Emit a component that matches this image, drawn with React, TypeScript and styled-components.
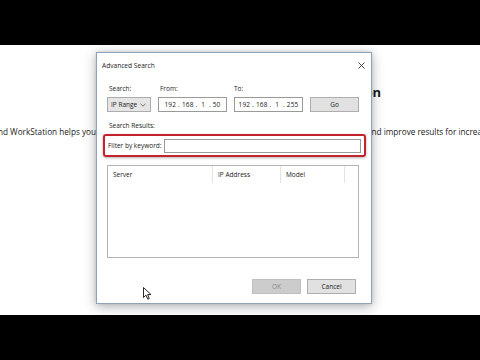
import React from 'react'
import styled, { createGlobalStyle } from 'styled-components'

const GlobalStyle = createGlobalStyle`
  html, body {
    margin: 0;
    padding: 0;
    background: #000;
  }
  body {
    font-family: "Open Sans", "Noto Sans", sans-serif;
  }
`

const Frame = styled.div`
  width: 480px;
  height: 360px;
  display: flex;
  flex-direction: column;
  background: #000;
  overflow: hidden;
`

const Letterbox = styled.div`
  height: 45px;
  flex: none;
  background: #000;
`

const Stage = styled.div`
  position: relative;
  height: 270px;
  flex: none;
  background: #fff;
  overflow: hidden;
`

const Heading = styled.div`
  padding: 38px 99px 0 0;
  height: 18px;
  line-height: 18px;
  text-align: right;
  font-size: 13px;
  font-weight: 700;
  color: #1a1a1a;
  white-space: nowrap;
`

const Lead = styled.div`
  display: flex;
  margin-top: 25px;
  height: 12px;
  line-height: 12px;
  font-size: 8.2px;
  color: #222;
  white-space: nowrap;
`

const LeadClip = styled.div`
  width: 96px;
  flex: none;
  display: flex;
  justify-content: flex-end;
  overflow: hidden;
`

const LeadGap = styled.div`
  width: 271px;
  flex: none;
`

const Dialog = styled.div`
  position: absolute;
  left: 96px;
  top: 7px;
  width: 274px;
  height: 250px;
  background: #fff;
  border: 1px solid #8fa3b8;
  box-shadow: 0 3px 12px rgba(0, 0, 0, 0.28), 0 0 4px rgba(80, 110, 140, 0.25);
  display: flex;
  flex-direction: column;
  font-size: 6.5px;
  line-height: 10px;
  color: #1a1a1a;
`

const TitleBar = styled.div`
  height: 25px;
  display: flex;
  align-items: center;
  justify-content: space-between;
  padding: 0 6px 0 5px;
  font-size: 6.6px;
`

const Body = styled.div`
  display: flex;
  flex-direction: column;
  padding: 0 12px 0 10px;
`

const FieldGrid = styled.div`
  display: grid;
  grid-template-columns: 44px 69px 69px 48px;
  grid-template-rows: 10px 15px;
  column-gap: 7px;
  row-gap: 3px;
  margin-top: 6px;
`

const Label = styled.div<{ $offset?: number }>`
  height: 10px;
  line-height: 10px;
  padding-left: ${(p) => p.$offset ?? 2}px;
`

const Select = styled.div`
  height: 15px;
  box-sizing: border-box;
  border: 1px solid #acacac;
  background: #e5e5e5;
  display: flex;
  align-items: center;
  justify-content: space-between;
  padding: 0 4px 0 3px;
`

const IpBox = styled.div`
  height: 15px;
  box-sizing: border-box;
  border: 1px solid #9a9a9a;
  background: #fff;
  display: flex;
  align-items: center;
  justify-content: center;
  letter-spacing: 0.2px;
  white-space: pre;
`

const Button = styled.div<{ $disabled?: boolean }>`
  height: 15px;
  box-sizing: border-box;
  border: 1px solid ${(p) => (p.$disabled ? '#bfbfbf' : '#adadad')};
  background: ${(p) => (p.$disabled ? '#cccccc' : '#e1e1e1')};
  color: ${(p) => (p.$disabled ? '#8a8a8a' : '#1a1a1a')};
  display: flex;
  align-items: center;
  justify-content: center;
  width: 49px;
`

const SectionLabel = styled.div`
  height: 10px;
  line-height: 10px;
  margin-top: 9px;
  padding-left: 2px;
`

const Highlight = styled.div`
  margin: 3px -7px 0 -4px;
  height: 23px;
  box-sizing: border-box;
  border: 2px solid #c3222e;
  border-radius: 3px;
  box-shadow: 0 1px 3px rgba(0, 0, 0, 0.3);
  display: flex;
  align-items: center;
  gap: 3px;
  padding: 0 3px 0 3px;
`

const KeywordInput = styled.div`
  flex: 1;
  height: 14px;
  box-sizing: border-box;
  border: 1px solid #9a9a9a;
  background: #fff;
`

const ResultList = styled.div`
  margin-top: 8px;
  height: 93px;
  box-sizing: border-box;
  border: 1px solid #b4b4b4;
  background: #fff;
`

const ListHeader = styled.div`
  display: grid;
  grid-template-columns: 105px 68px 64px;
  height: 17px;
`

const HeaderCell = styled.div`
  border-right: 1px solid #e3e3e3;
  display: flex;
  align-items: center;
  padding-left: 5px;
`

const Footer = styled.div`
  display: flex;
  justify-content: flex-end;
  gap: 6px;
  margin-top: 21px;
  padding-right: 3px;
`

const Cursor = styled.svg`
  position: absolute;
  left: 143px;
  top: 242px;
`

const CloseIcon = () => (
  <svg width="7" height="7" viewBox="0 0 7 7">
    <path d="M0.5 0.5 L6.5 6.5 M6.5 0.5 L0.5 6.5" stroke="#333" strokeWidth="0.9" />
  </svg>
)

const Chevron = () => (
  <svg width="6" height="4" viewBox="0 0 6 4">
    <path d="M0.5 0.8 L3 3.2 L5.5 0.8" stroke="#555" strokeWidth="0.8" fill="none" />
  </svg>
)

export default function App() {
  return (
    <>
      <GlobalStyle />
      <Frame>
        <Letterbox />
        <Stage>
          <Heading>Advanced Search in Discovery Station</Heading>
          <Lead>
            <LeadClip>The Discovery tool in NAS and WorkStation helps you</LeadClip>
            <LeadGap />
            <span>and improve results for increased efficiency</span>
          </Lead>

          <Dialog>
            <TitleBar>
              <span>Advanced Search</span>
              <CloseIcon />
            </TitleBar>
            <Body>
              <FieldGrid>
                <Label>Search:</Label>
                <Label>From:</Label>
                <Label $offset={0}>To:</Label>
                <span />
                <Select>
                  <span>IP Range</span>
                  <Chevron />
                </Select>
                <IpBox>192 . 168 .  1  . 50</IpBox>
                <IpBox>192 . 168 .  1  . 255</IpBox>
                <Button>Go</Button>
              </FieldGrid>
              <SectionLabel>Search Results:</SectionLabel>
              <Highlight>
                <span>Filter by keyword:</span>
                <KeywordInput />
              </Highlight>
              <ResultList>
                <ListHeader>
                  <HeaderCell>Server</HeaderCell>
                  <HeaderCell>IP Address</HeaderCell>
                  <HeaderCell>Model</HeaderCell>
                </ListHeader>
              </ResultList>
              <Footer>
                <Button $disabled>OK</Button>
                <Button>Cancel</Button>
              </Footer>
            </Body>
          </Dialog>

          <Cursor width="9" height="13" viewBox="0 0 9 13">
            <path d="M0.5 0.5 L0.5 10.5 L3 8.2 L4.8 12.2 L6.3 11.5 L4.6 7.6 L8 7.6 Z" fill="#fff" stroke="#111" strokeWidth="0.9" strokeLinejoin="round" />
          </Cursor>
        </Stage>
        <Letterbox />
      </Frame>
    </>
  )
}
